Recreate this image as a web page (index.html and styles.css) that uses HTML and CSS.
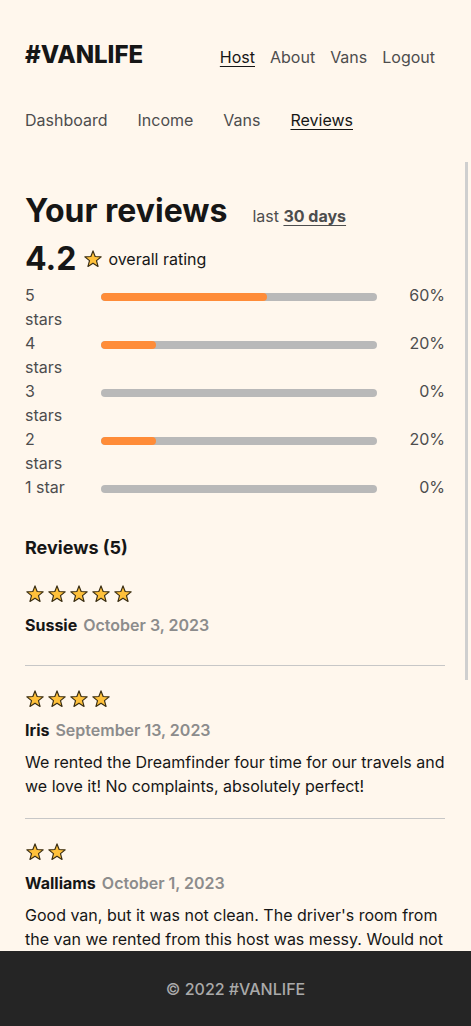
FILE: index.html
```html
<!DOCTYPE html>
<html lang="en">
<head>
<meta charset="utf-8">
<title>#VANLIFE – Reviews</title>
<link rel="stylesheet" href="styles.css">
</head>
<body>
<svg class="defs" width="0" height="0" aria-hidden="true">
  <symbol id="star" viewBox="0 0 24 24">
    <polygon points="12,2.3 14.59,9.04 21.8,9.42 16.18,13.96 18.05,20.93 12,17 5.95,20.93 7.82,13.96 2.2,9.42 9.41,9.04" fill="#FFC13B" stroke="#3a2e14" stroke-width="1.4" stroke-linejoin="round"/>
  </symbol>
</svg>
<div class="app">
  <header class="site-header">
    <a class="logo" href="#">#VANLIFE</a>
    <nav class="site-nav">
      <a class="active" href="#">Host</a>
      <a href="#">About</a>
      <a href="#">Vans</a>
      <a href="#">Logout</a>
    </nav>
  </header>
  <nav class="host-nav">
    <a href="#">Dashboard</a>
    <a href="#">Income</a>
    <a href="#">Vans</a>
    <a class="active" href="#">Reviews</a>
  </nav>
  <div class="scroll-wrap">
  <main class="main">
    <section class="summary">
      <div class="title-row">
        <h1 class="title">Your reviews</h1>
        <p class="period">last <span class="period-link">30 days</span></p>
      </div>
      <div class="overall">
        <span class="overall-score">4.2</span>
        <svg class="overall-star"><use href="#star"/></svg>
        <span class="overall-label">overall rating</span>
      </div>
      <div class="bars">
        <div class="bar-row"><span class="bar-label">5 stars</span><div class="bar"><div class="bar-fill" style="width:60%"></div></div><span class="bar-pct">60%</span></div>
        <div class="bar-row"><span class="bar-label">4 stars</span><div class="bar"><div class="bar-fill" style="width:20%"></div></div><span class="bar-pct">20%</span></div>
        <div class="bar-row"><span class="bar-label">3 stars</span><div class="bar"><div class="bar-fill" style="width:0%"></div></div><span class="bar-pct">0%</span></div>
        <div class="bar-row"><span class="bar-label">2 stars</span><div class="bar"><div class="bar-fill" style="width:20%"></div></div><span class="bar-pct">20%</span></div>
        <div class="bar-row"><span class="bar-label">1 star</span><div class="bar"><div class="bar-fill" style="width:0%"></div></div><span class="bar-pct">0%</span></div>
      </div>
    </section>
    <section class="reviews">
      <h2 class="reviews-title">Reviews (5)</h2>
      <article class="review">
        <div class="stars">
          <svg class="star"><use href="#star"/></svg><svg class="star"><use href="#star"/></svg><svg class="star"><use href="#star"/></svg><svg class="star"><use href="#star"/></svg><svg class="star"><use href="#star"/></svg>
        </div>
        <div class="review-meta"><span class="review-name">Sussie</span><span class="review-date">October 3, 2023</span></div>
        <p class="review-text"></p>
      </article>
      <hr class="divider">
      <article class="review">
        <div class="stars">
          <svg class="star"><use href="#star"/></svg><svg class="star"><use href="#star"/></svg><svg class="star"><use href="#star"/></svg><svg class="star"><use href="#star"/></svg>
        </div>
        <div class="review-meta"><span class="review-name">Iris</span><span class="review-date">September 13, 2023</span></div>
        <p class="review-text">We rented the Dreamfinder four time for our travels and we love it! No complaints, absolutely perfect!</p>
      </article>
      <hr class="divider">
      <article class="review">
        <div class="stars">
          <svg class="star"><use href="#star"/></svg><svg class="star"><use href="#star"/></svg>
        </div>
        <div class="review-meta"><span class="review-name">Walliams</span><span class="review-date">October 1, 2023</span></div>
        <p class="review-text">Good van, but it was not clean. The driver's room from the van we rented from this host was messy. Would not recommend.</p>
      </article>
      <hr class="divider">
      <article class="review">
        <div class="stars">
          <svg class="star"><use href="#star"/></svg><svg class="star"><use href="#star"/></svg><svg class="star"><use href="#star"/></svg><svg class="star"><use href="#star"/></svg><svg class="star"><use href="#star"/></svg>
        </div>
        <div class="review-meta"><span class="review-name">Elliot</span><span class="review-date">January 3, 2023</span></div>
        <p class="review-text">The beach bum is such an awesome van! Such a comfortable trip. We had it for 2 weeks and there was not a single issue. Super clean when we picked it up and the host is very comfortable and understanding. Highly recommend!</p>
      </article>
      <hr class="divider">
      <article class="review">
        <div class="stars">
          <svg class="star"><use href="#star"/></svg><svg class="star"><use href="#star"/></svg><svg class="star"><use href="#star"/></svg><svg class="star"><use href="#star"/></svg><svg class="star"><use href="#star"/></svg>
        </div>
        <div class="review-meta"><span class="review-name">Sandy</span><span class="review-date">December 12, 2022</span></div>
        <p class="review-text">This is our third time using the Modest Explorer for our travels and we love it!</p>
      </article>
    </section>
  </main>
  </div>
  <footer class="site-footer">© 2022 #VANLIFE</footer>
</div>
</body>
</html>
```

FILE: styles.css
```css
* { box-sizing: border-box; }

html, body {
  margin: 0;
  padding: 0;
  height: 100%;
}

body {
  background: #FFF7ED;
  font-family: Inter, "Noto Sans", sans-serif;
  font-size: 16px;
  line-height: 24px;
  color: #161616;
}

.defs { position: absolute; width: 0; height: 0; overflow: hidden; }

.app {
  height: 100vh;
  display: flex;
  flex-direction: column;
}

a { color: inherit; text-decoration: none; }

/* header */
.site-header {
  display: flex;
  justify-content: space-between;
  align-items: baseline;
  padding: 36px 36px 0 25px;
}

.logo {
  font-size: 24px;
  line-height: 38px;
  font-weight: 800;
  color: #161616;
}

.site-nav {
  display: flex;
  gap: 15px;
}

.site-nav a {
  color: #4D4D4D;
}

.site-nav a.active,
.host-nav a.active {
  color: #161616;
  text-decoration: underline;
  text-underline-offset: 3px;
}

.host-nav {
  display: flex;
  gap: 30px;
  padding: 0 25px;
  margin-top: 34px;
}

.host-nav a { color: #4D4D4D; }

/* scroll area */
.scroll-wrap {
  flex: 1;
  min-height: 0;
  position: relative;
  margin-top: 28px;
  display: flex;
  flex-direction: column;
}

/* scrollbar thumb, drawn over the scroll area's right edge */
.scroll-wrap::after {
  content: "";
  position: absolute;
  top: 2px;
  right: 3px;
  width: 3px;
  height: 518px;
  background: #CFCFCF;
}

.main {
  flex: 1;
  min-height: 0;
  overflow-y: auto;
  scrollbar-width: none;
  padding: 31px 26px 8px 25px;
}

.main::-webkit-scrollbar { display: none; }

/* summary */
.title-row {
  display: flex;
  align-items: baseline;
  gap: 25px;
}

.title {
  margin: 0;
  font-size: 32px;
  line-height: 40px;
  font-weight: 700;
}

.period {
  margin: 0;
  color: #4D4D4D;
}

.period-link {
  font-weight: 700;
  text-decoration: underline;
  text-underline-offset: 3px;
}

.overall {
  display: flex;
  align-items: center;
  margin-top: 8px;
}

.overall-score {
  font-size: 32px;
  line-height: 40px;
  font-weight: 700;
}

.overall-star {
  width: 20px;
  height: 20px;
  margin-left: 7px;
  margin-right: 5px;
}

.bars {
  margin-top: 4px;
}

.bar-row {
  display: flex;
  align-items: flex-start;
  color: #4D4D4D;
}

.bar-label {
  width: 48px;
  margin-right: 28px;
}

.bar {
  flex: 1;
  height: 8px;
  margin-top: 10px;
  background: #B9B9B9;
  border-radius: 4px;
  overflow: hidden;
}

.bar-fill {
  height: 100%;
  background: #FF8C38;
  border-radius: 4px;
}

.bar-pct {
  width: 68px;
  text-align: right;
}

/* reviews */
.reviews-title {
  margin: 37px 0 25px;
  font-size: 18px;
  line-height: 24px;
  font-weight: 700;
}

.review {
  padding-bottom: 20px;
}

.divider + .review { padding-top: 24px; }

.stars {
  display: flex;
  gap: 2px;
  height: 18px;
  align-items: center;
  margin-bottom: 10px;
}

.star {
  width: 20px;
  height: 20px;
}

.review-meta {
  display: flex;
  gap: 6px;
}

.review-name { font-weight: 700; }

.review-date {
  color: #8C8C8C;
  font-weight: 600;
}

.review-text {
  margin: 8px 0 0;
}

.divider {
  margin: 0;
  border: 0;
  border-top: 1px solid #C7C7C7;
}

.site-footer {
  flex: none;
  height: 75px;
  background: #252525;
  color: #AAAAAA;
  display: flex;
  align-items: center;
  justify-content: center;
  font-weight: 500;
}
```
